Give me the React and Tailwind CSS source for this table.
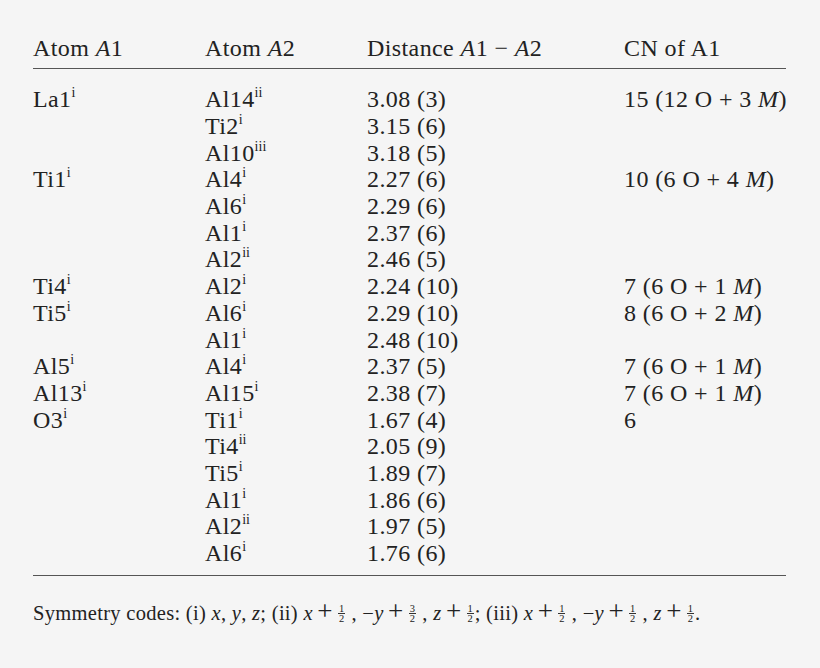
const rows = [
  ["La1", "i", "Al14", "ii", "3.08 (3)", ["15 (12 O + 3 ", "M", ")"]],
  ["", "", "Ti2", "i", "3.15 (6)", null],
  ["", "", "Al10", "iii", "3.18 (5)", null],
  ["Ti1", "i", "Al4", "i", "2.27 (6)", ["10 (6 O + 4 ", "M", ")"]],
  ["", "", "Al6", "i", "2.29 (6)", null],
  ["", "", "Al1", "i", "2.37 (6)", null],
  ["", "", "Al2", "ii", "2.46 (5)", null],
  ["Ti4", "i", "Al2", "i", "2.24 (10)", ["7 (6 O + 1 ", "M", ")"]],
  ["Ti5", "i", "Al6", "i", "2.29 (10)", ["8 (6 O + 2 ", "M", ")"]],
  ["", "", "Al1", "i", "2.48 (10)", null],
  ["Al5", "i", "Al4", "i", "2.37 (5)", ["7 (6 O + 1 ", "M", ")"]],
  ["Al13", "i", "Al15", "i", "2.38 (7)", ["7 (6 O + 1 ", "M", ")"]],
  ["O3", "i", "Ti1", "i", "1.67 (4)", ["6", "", ""]],
  ["", "", "Ti4", "ii", "2.05 (9)", null],
  ["", "", "Ti5", "i", "1.89 (7)", null],
  ["", "", "Al1", "i", "1.86 (6)", null],
  ["", "", "Al2", "ii", "1.97 (5)", null],
  ["", "", "Al6", "i", "1.76 (6)", null],
];

function Atom({ name, sup }) {
  if (!name) return <span />;
  return (
    <span>
      {name}
      <sup className="text-[14px] -top-[10px] tracking-normal">{sup}</sup>
    </span>
  );
}

// stacked fraction, numerator baseline sits 8px above the text baseline
function Frac({ n, d }) {
  return (
    <span className="inline-flex flex-col items-center align-[8px] mx-[1px] text-[10.5px] leading-[9.5px] tracking-normal">
      <span>{n}</span>
      <span className="h-px w-[7px] bg-[#333]" />
      <span>{d}</span>
    </span>
  );
}

function Plus() {
  return <span className="mx-[4.5px] text-[27px] leading-[0] tracking-normal">+</span>;
}

export default function App() {
  return (
    <div
      className="w-[820px] h-[668px] bg-[#f5f5f5] text-[#222] pl-[33px] pr-[34px] pt-[35px]"
      style={{ fontFamily: '"Liberation Serif", "Times New Roman", serif' }}
    >
      <div className="grid grid-cols-[172px_162px_257px_1fr] whitespace-nowrap text-[24px] tracking-[0.4px] leading-[26.7px] pb-[6px] border-b border-[#555]">
        <span>
          Atom <i>A</i>1
        </span>
        <span>
          Atom <i>A</i>2
        </span>
        <span>
          Distance <i>A</i>1 − <i>A</i>2
        </span>
        <span>CN of A1</span>
      </div>

      <div className="pt-[17.5px] pb-[8px] border-b border-[#555]">
        {rows.map((r, i) => (
          <div
            key={i}
            className="grid grid-cols-[172px_162px_257px_1fr] whitespace-nowrap text-[24px] tracking-[0.4px] leading-[26.7px]"
          >
            <Atom name={r[0]} sup={r[1]} />
            <Atom name={r[2]} sup={r[3]} />
            <span>{r[4]}</span>
            <span>
              {r[5] && (
                <>
                  {r[5][0]}
                  <i>{r[5][1]}</i>
                  {r[5][2]}
                </>
              )}
            </span>
          </div>
        ))}
      </div>

      <p className="whitespace-nowrap text-[20.5px] tracking-[0.3px] leading-[24px] mt-[25px]">
        Symmetry codes: (i) <i>x</i>, <i>y</i>, <i>z</i>; (ii) <i>x</i>
        <Plus />
        <Frac n="1" d="2" /> , −<i>y</i>
        <Plus />
        <Frac n="3" d="2" /> , <i>z</i>
        <Plus />
        <Frac n="1" d="2" />; (iii) <i>x</i>
        <Plus />
        <Frac n="1" d="2" /> , −<i>y</i>
        <Plus />
        <Frac n="1" d="2" /> , <i>z</i>
        <Plus />
        <Frac n="1" d="2" />.
      </p>
    </div>
  );
}
